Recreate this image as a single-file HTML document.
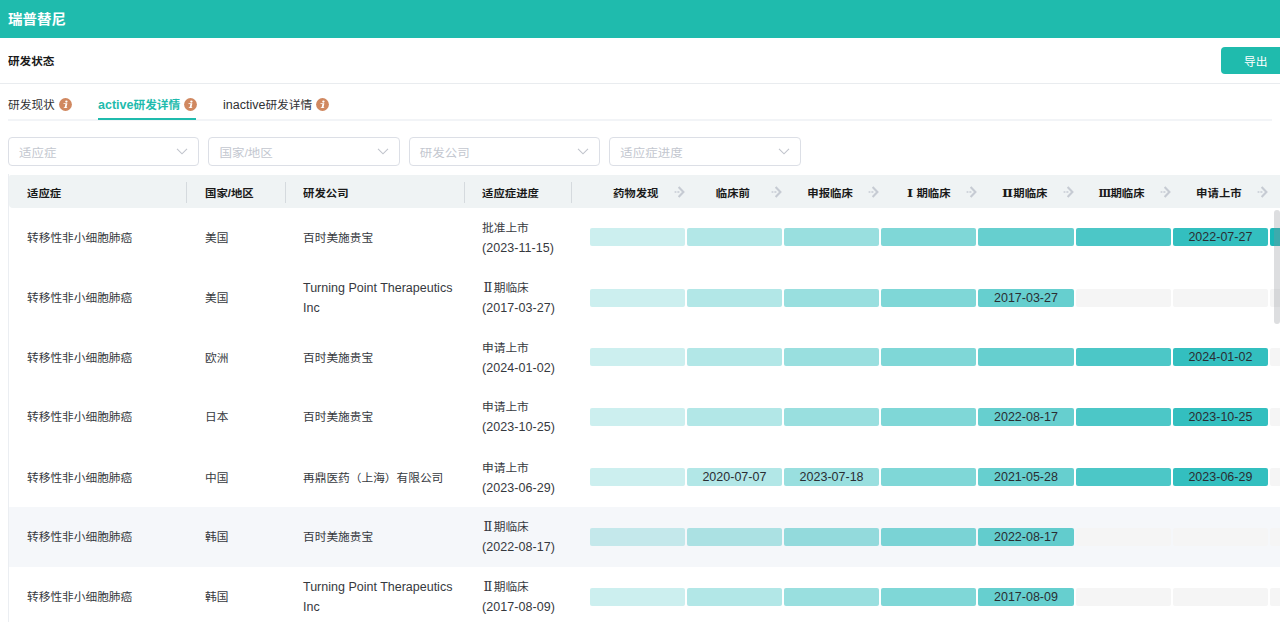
<!DOCTYPE html>
<html lang="zh">
<head>
<meta charset="utf-8">
<title>瑞普替尼</title>
<style>
*{box-sizing:border-box;margin:0;padding:0}
html,body{width:1280px;height:622px;overflow:hidden;background:#fff}
body{font-family:"Liberation Sans","Noto Sans CJK SC",sans-serif;font-size:11.7px;color:#303133;position:relative}
.top{position:absolute;left:0;top:0;width:1280px;height:38px;background:#1fbbad;color:#fff;font-weight:bold;font-size:14.5px;line-height:38px;padding-left:8px}
.top span{position:relative;top:.4px}
.t{display:inline-block;transform:scaleY(.93)}
.sec{position:absolute;left:8px;top:50px;height:22px;line-height:22px;font-weight:bold;font-size:11.7px;color:#1a1a1a}
.hr1{position:absolute;left:0;top:83px;width:1280px;height:1px;background:#e9ecef}
.btn{position:absolute;left:1221px;top:47px;width:70px;height:27px;background:#1fbbad;border-radius:4px;color:#fff;font-size:11.7px;line-height:29px;padding-left:23px}
.tabline{position:absolute;left:8px;top:119px;width:1264px;height:2px;background:#f2f4f7}
.actline{position:absolute;left:98px;top:118px;width:98px;height:2px;background:#1fbbad}
.tab{position:absolute;top:89px;height:32px;line-height:32px;font-size:11.7px;color:#303133;white-space:nowrap}
.tab.act{color:#1fbbad;font-weight:bold}
.ic{display:inline-block;vertical-align:-2px;margin-left:4px}
.sel{position:absolute;top:137px;width:191.4px;height:29px;border:1px solid #dcdfe6;border-radius:4px;font-size:12.5px;line-height:28px;color:#c3c7cf;padding-left:10px}
.sel svg{position:absolute;right:10px;top:10px}
.sel .t{position:relative;top:.9px}
.thead{position:absolute;left:9px;top:175px;width:1271px;height:32.7px;background:#eff3f4;border-radius:2px 0 0 4px;overflow:hidden}
.th{position:absolute;top:2px;height:32px;line-height:32px;font-weight:bold;font-size:11.7px;color:#1a1a1a;white-space:nowrap}
.sep{position:absolute;top:7px;width:1px;height:20.6px;background:#d5dade}
.st{position:absolute;top:2px;width:97.2px;height:32px;line-height:32px;font-weight:bold;font-size:11.7px;color:#1a1a1a;white-space:nowrap;text-align:center;padding-right:3px}
.st .ar{position:absolute;right:.8px;top:9.2px}
.lb{position:absolute;left:8px;top:174px;width:1px;height:448px;background:#ebeef2}
.row{position:absolute;left:9px;width:1271px;height:59.88px}
.row.hv{background:#f5f7fa}
.c{position:absolute;font-size:11.7px;color:#36393e;line-height:20px;white-space:nowrap;top:20px}
.c.two{top:10px}
.c1{left:18px}.c2{left:196px}.c3{left:294px}.c4{left:473px}
.lat{font-size:12.5px;transform:none}
.dt{font-size:12.5px;transform:none;letter-spacing:.05px}
.bar{position:absolute;top:20.8px;height:18px;width:95.2px;border-radius:2px;font-size:12.5px;line-height:18px;text-align:center;color:#2a2e33}
.b0{background:#f5f5f5}
.b1{background:rgba(0,175,175,.2)}.b2{background:rgba(0,175,175,.3)}.b3{background:rgba(0,175,175,.4)}.b4{background:rgba(0,175,175,.5)}
.b5{background:rgba(0,175,175,.6)}.b6{background:rgba(0,175,175,.7)}.b7{background:rgba(0,175,175,.8)}.b8{background:rgba(0,175,175,.9)}
.sb{position:absolute;left:1274px;top:210px;width:6px;height:114px;border-radius:3px;background:rgba(144,147,153,.3)}
.rn{font-family:"DejaVu Serif",serif;display:inline-block;width:11.7px;text-align:center;font-size:13px;line-height:1}
.rn1{width:9.4px;text-align:left;margin-left:3px}
.rn3 i{font-style:normal;display:inline-block;transform:scaleX(.8);margin:0 -1.5px}
.sh{position:absolute;left:0;width:100%;height:0}
.bar .t{transform:none}
.en{font-size:12.5px}
.th .t,.st .t{transform:scaleY(.9);font-size:11.4px}
.sec .t{transform:scaleY(.88);font-size:11.6px}
</style>
</head>
<body>
<div class="top"><span class="t">瑞普替尼</span></div>
<div class="sec"><span class="t">研发状态</span></div>
<div class="btn"><span class="t">导出</span></div>
<div class="hr1"></div>
<div class="tabline"></div>
<div class="tab" style="left:8px"><span class="t">研发现状</span><svg class="ic" width="13" height="13" viewBox="0 0 13 13"><circle cx="6.5" cy="6.5" r="6.4" fill="#d08860"/><ellipse cx="7.4" cy="3.6" rx="1.2" ry="1.05" fill="#fff"/><path d="M4.6 5.2 H8.4 L7.5 9.2 H8.3 L8.1 10.05 H4.7 L4.9 9.2 H5.7 L6.4 6.05 H4.4 Z" fill="#fff"/></svg></div>
<div class="tab act" style="left:98px"><span class="en">active</span><span class="t">研发详情</span><svg class="ic" width="13" height="13" viewBox="0 0 13 13"><circle cx="6.5" cy="6.5" r="6.4" fill="#d08860"/><ellipse cx="7.4" cy="3.6" rx="1.2" ry="1.05" fill="#fff"/><path d="M4.6 5.2 H8.4 L7.5 9.2 H8.3 L8.1 10.05 H4.7 L4.9 9.2 H5.7 L6.4 6.05 H4.4 Z" fill="#fff"/></svg></div>
<div class="actline"></div>
<div class="tab" style="left:223px"><span class="en">inactive</span><span class="t">研发详情</span><svg class="ic" width="13" height="13" viewBox="0 0 13 13"><circle cx="6.5" cy="6.5" r="6.4" fill="#d08860"/><ellipse cx="7.4" cy="3.6" rx="1.2" ry="1.05" fill="#fff"/><path d="M4.6 5.2 H8.4 L7.5 9.2 H8.3 L8.1 10.05 H4.7 L4.9 9.2 H5.7 L6.4 6.05 H4.4 Z" fill="#fff"/></svg></div>
<div class="sel" style="left:8.0px"><span class="t">适应症</span><svg width="12" height="7" viewBox="0 0 12 7"><path d="M1 0.8 L6 5.8 L11 0.8" fill="none" stroke="#c0c4cc" stroke-width="1.1"/></svg></div>
<div class="sel" style="left:208.4px"><span class="t">国家/地区</span><svg width="12" height="7" viewBox="0 0 12 7"><path d="M1 0.8 L6 5.8 L11 0.8" fill="none" stroke="#c0c4cc" stroke-width="1.1"/></svg></div>
<div class="sel" style="left:408.8px"><span class="t">研发公司</span><svg width="12" height="7" viewBox="0 0 12 7"><path d="M1 0.8 L6 5.8 L11 0.8" fill="none" stroke="#c0c4cc" stroke-width="1.1"/></svg></div>
<div class="sel" style="left:609.2px"><span class="t">适应症进度</span><svg width="12" height="7" viewBox="0 0 12 7"><path d="M1 0.8 L6 5.8 L11 0.8" fill="none" stroke="#c0c4cc" stroke-width="1.1"/></svg></div>
<div class="thead">
<div class="th" style="left:18px"><span class="t">适应症</span></div>
<div class="th" style="left:196px"><span class="t">国家/地区</span></div>
<div class="th" style="left:294px"><span class="t">研发公司</span></div>
<div class="th" style="left:473px"><span class="t">适应症进度</span></div>
<div class="sep" style="left:177px"></div>
<div class="sep" style="left:276px"></div>
<div class="sep" style="left:455px"></div>
<div class="sep" style="left:562px"></div>
<div class="st" style="left:579.6px"><span class="t">药物发现</span><svg class="ar" width="11" height="12" viewBox="0 0 11 12"><path d="M4.6 1 L9.4 6 L4.6 11" fill="none" stroke="#c6cbd3" stroke-width="2.1"/><path d="M0.6 6 H2.4 M3.4 6 H5.4" fill="none" stroke="#c6cbd3" stroke-width="1.6"/></svg></div>
<div class="st" style="left:676.8px"><span class="t">临床前</span><svg class="ar" width="11" height="12" viewBox="0 0 11 12"><path d="M4.6 1 L9.4 6 L4.6 11" fill="none" stroke="#c6cbd3" stroke-width="2.1"/><path d="M0.6 6 H2.4 M3.4 6 H5.4" fill="none" stroke="#c6cbd3" stroke-width="1.6"/></svg></div>
<div class="st" style="left:774.0px"><span class="t">申报临床</span><svg class="ar" width="11" height="12" viewBox="0 0 11 12"><path d="M4.6 1 L9.4 6 L4.6 11" fill="none" stroke="#c6cbd3" stroke-width="2.1"/><path d="M0.6 6 H2.4 M3.4 6 H5.4" fill="none" stroke="#c6cbd3" stroke-width="1.6"/></svg></div>
<div class="st" style="left:871.2px"><span class="t"><span class="rn rn1">Ⅰ</span>期临床</span><svg class="ar" width="11" height="12" viewBox="0 0 11 12"><path d="M4.6 1 L9.4 6 L4.6 11" fill="none" stroke="#c6cbd3" stroke-width="2.1"/><path d="M0.6 6 H2.4 M3.4 6 H5.4" fill="none" stroke="#c6cbd3" stroke-width="1.6"/></svg></div>
<div class="st" style="left:968.4px"><span class="t"><span class="rn">Ⅱ</span>期临床</span><svg class="ar" width="11" height="12" viewBox="0 0 11 12"><path d="M4.6 1 L9.4 6 L4.6 11" fill="none" stroke="#c6cbd3" stroke-width="2.1"/><path d="M0.6 6 H2.4 M3.4 6 H5.4" fill="none" stroke="#c6cbd3" stroke-width="1.6"/></svg></div>
<div class="st" style="left:1065.6px"><span class="t"><span class="rn rn3"><i>Ⅲ</i></span>期临床</span><svg class="ar" width="11" height="12" viewBox="0 0 11 12"><path d="M4.6 1 L9.4 6 L4.6 11" fill="none" stroke="#c6cbd3" stroke-width="2.1"/><path d="M0.6 6 H2.4 M3.4 6 H5.4" fill="none" stroke="#c6cbd3" stroke-width="1.6"/></svg></div>
<div class="st" style="left:1162.8px"><span class="t">申请上市</span><svg class="ar" width="11" height="12" viewBox="0 0 11 12"><path d="M4.6 1 L9.4 6 L4.6 11" fill="none" stroke="#c6cbd3" stroke-width="2.1"/><path d="M0.6 6 H2.4 M3.4 6 H5.4" fill="none" stroke="#c6cbd3" stroke-width="1.6"/></svg></div>
<div class="st" style="left:1260.0px"><span class="t">批准上市</span><svg class="ar" width="11" height="12" viewBox="0 0 11 12"><path d="M4.6 1 L9.4 6 L4.6 11" fill="none" stroke="#c6cbd3" stroke-width="2.1"/><path d="M0.6 6 H2.4 M3.4 6 H5.4" fill="none" stroke="#c6cbd3" stroke-width="1.6"/></svg></div>
</div>
<div class="lb"></div>
<div class="row" style="top:207.70px">
<div class="c c1"><span class="t">转移性非小细胞肺癌</span></div>
<div class="c c2"><span class="t">美国</span></div>
<div class="c c3"><span class="t">百时美施贵宝</span></div>
<div class="c c4 two"><span class="t">批准上市</span><br><span class="t dt">(2023-11-15)</span></div>
<div class="bar b1" style="left:580.6px"></div>
<div class="bar b2" style="left:677.8px"></div>
<div class="bar b3" style="left:775.0px"></div>
<div class="bar b4" style="left:872.2px"></div>
<div class="bar b5" style="left:969.4px"></div>
<div class="bar b6" style="left:1066.6px"></div>
<div class="bar b7" style="left:1163.8px"><span class="t">2022-07-27</span></div>
<div class="bar b8" style="left:1261.0px"><span class="t">2023-11-15</span></div>
</div>
<div class="row" style="top:267.58px">
<div class="c c1"><span class="t">转移性非小细胞肺癌</span></div>
<div class="c c2"><span class="t">美国</span></div>
<div class="c c3 two"><span class="t lat">Turning Point Therapeutics</span><br><span class="t lat">Inc</span></div>
<div class="c c4 two"><span class="t"><span class="rn">Ⅱ</span>期临床</span><br><span class="t dt">(2017-03-27)</span></div>
<div class="bar b1" style="left:580.6px;top:21.5px"></div>
<div class="bar b2" style="left:677.8px;top:21.5px"></div>
<div class="bar b3" style="left:775.0px;top:21.5px"></div>
<div class="bar b4" style="left:872.2px;top:21.5px"></div>
<div class="bar b5" style="left:969.4px;top:21.5px"><span class="t">2017-03-27</span></div>
<div class="bar b0" style="left:1066.6px;top:21.5px"></div>
<div class="bar b0" style="left:1163.8px;top:21.5px"></div>
<div class="bar b0" style="left:1261.0px;top:21.5px"></div>
</div>
<div class="row" style="top:327.46px">
<div class="sh" style="top:1px">
<div class="c c1"><span class="t">转移性非小细胞肺癌</span></div>
<div class="c c2"><span class="t">欧洲</span></div>
<div class="c c3"><span class="t">百时美施贵宝</span></div>
<div class="c c4 two"><span class="t">申请上市</span><br><span class="t dt">(2024-01-02)</span></div>
</div>
<div class="bar b1" style="left:580.6px"></div>
<div class="bar b2" style="left:677.8px"></div>
<div class="bar b3" style="left:775.0px"></div>
<div class="bar b4" style="left:872.2px"></div>
<div class="bar b5" style="left:969.4px"></div>
<div class="bar b6" style="left:1066.6px"></div>
<div class="bar b7" style="left:1163.8px"><span class="t">2024-01-02</span></div>
<div class="bar b0" style="left:1261.0px"></div>
</div>
<div class="row" style="top:387.34px">
<div class="c c1"><span class="t">转移性非小细胞肺癌</span></div>
<div class="c c2"><span class="t">日本</span></div>
<div class="c c3"><span class="t">百时美施贵宝</span></div>
<div class="c c4 two"><span class="t">申请上市</span><br><span class="t dt">(2023-10-25)</span></div>
<div class="bar b1" style="left:580.6px"></div>
<div class="bar b2" style="left:677.8px"></div>
<div class="bar b3" style="left:775.0px"></div>
<div class="bar b4" style="left:872.2px"></div>
<div class="bar b5" style="left:969.4px"><span class="t">2022-08-17</span></div>
<div class="bar b6" style="left:1066.6px"></div>
<div class="bar b7" style="left:1163.8px"><span class="t">2023-10-25</span></div>
<div class="bar b0" style="left:1261.0px"></div>
</div>
<div class="row" style="top:447.22px">
<div class="sh" style="top:1px">
<div class="c c1"><span class="t">转移性非小细胞肺癌</span></div>
<div class="c c2"><span class="t">中国</span></div>
<div class="c c3"><span class="t">再鼎医药（上海）有限公司</span></div>
<div class="c c4 two"><span class="t">申请上市</span><br><span class="t dt">(2023-06-29)</span></div>
</div>
<div class="bar b1" style="left:580.6px"></div>
<div class="bar b2" style="left:677.8px"><span class="t">2020-07-07</span></div>
<div class="bar b3" style="left:775.0px"><span class="t">2023-07-18</span></div>
<div class="bar b4" style="left:872.2px"></div>
<div class="bar b5" style="left:969.4px"><span class="t">2021-05-28</span></div>
<div class="bar b6" style="left:1066.6px"></div>
<div class="bar b7" style="left:1163.8px"><span class="t">2023-06-29</span></div>
<div class="bar b0" style="left:1261.0px"></div>
</div>
<div class="row hv" style="top:507.10px">
<div class="c c1"><span class="t">转移性非小细胞肺癌</span></div>
<div class="c c2"><span class="t">韩国</span></div>
<div class="c c3"><span class="t">百时美施贵宝</span></div>
<div class="c c4 two"><span class="t"><span class="rn">Ⅱ</span>期临床</span><br><span class="t dt">(2022-08-17)</span></div>
<div class="bar b1" style="left:580.6px"></div>
<div class="bar b2" style="left:677.8px"></div>
<div class="bar b3" style="left:775.0px"></div>
<div class="bar b4" style="left:872.2px"></div>
<div class="bar b5" style="left:969.4px"><span class="t">2022-08-17</span></div>
<div class="bar b0" style="left:1066.6px"></div>
<div class="bar b0" style="left:1163.8px"></div>
<div class="bar b0" style="left:1261.0px"></div>
</div>
<div class="row" style="top:566.98px">
<div class="c c1"><span class="t">转移性非小细胞肺癌</span></div>
<div class="c c2"><span class="t">韩国</span></div>
<div class="c c3 two"><span class="t lat">Turning Point Therapeutics</span><br><span class="t lat">Inc</span></div>
<div class="c c4 two"><span class="t"><span class="rn">Ⅱ</span>期临床</span><br><span class="t dt">(2017-08-09)</span></div>
<div class="bar b1" style="left:580.6px"></div>
<div class="bar b2" style="left:677.8px"></div>
<div class="bar b3" style="left:775.0px"></div>
<div class="bar b4" style="left:872.2px"></div>
<div class="bar b5" style="left:969.4px"><span class="t">2017-08-09</span></div>
<div class="bar b0" style="left:1066.6px"></div>
<div class="bar b0" style="left:1163.8px"></div>
<div class="bar b0" style="left:1261.0px"></div>
</div>
<div class="sb"></div>
</body>
</html>
